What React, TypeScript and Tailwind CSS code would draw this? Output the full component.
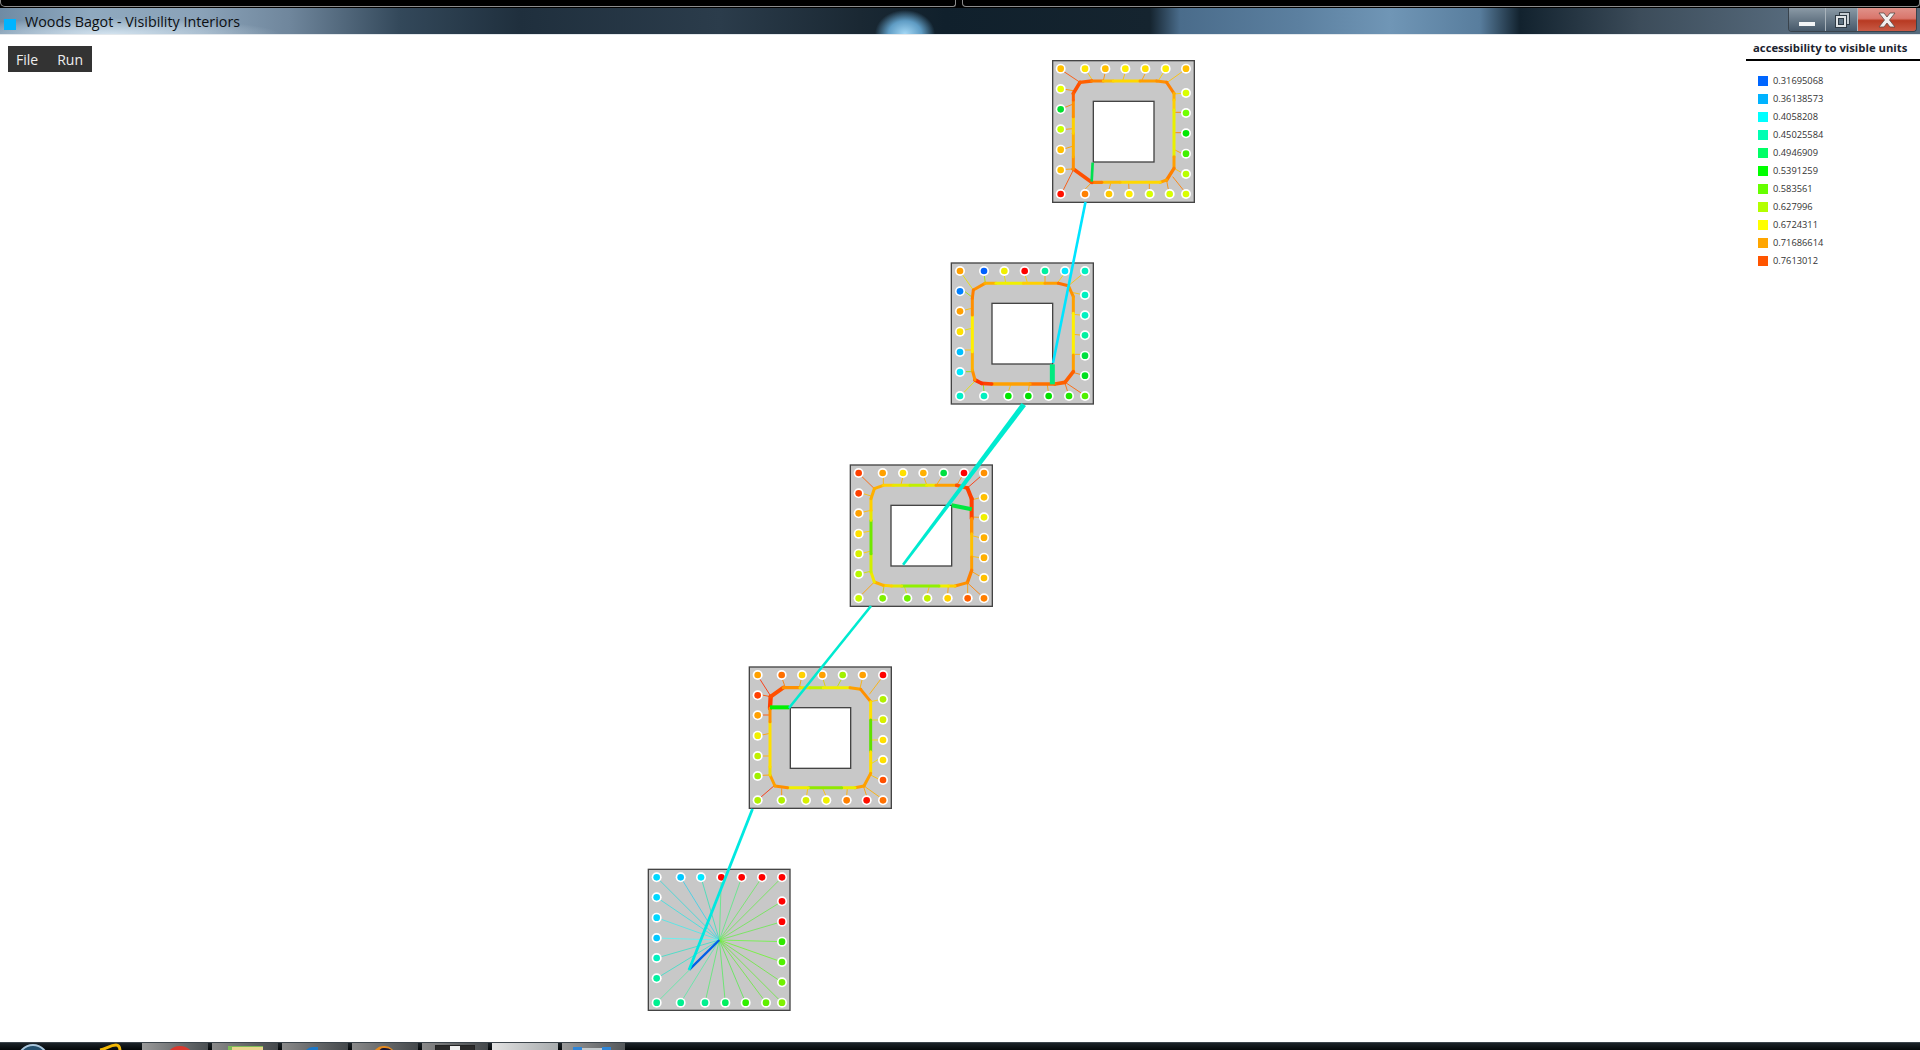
const legend = [
  ['#0066ff', '0.31695068'],
  ['#00b3ff', '0.36138573'],
  ['#00ffff', '0.4058208'],
  ['#00ffb3', '0.45025584'],
  ['#00ff66', '0.4946909'],
  ['#00ff00', '0.5391259'],
  ['#66ff00', '0.583561'],
  ['#b3ff00', '0.627996'],
  ['#ffff00', '0.6724311'],
  ['#ffa600', '0.71686614'],
  ['#ff5500', '0.7613012'],
];

type Dot = [number, number, string];
type Spoke = [number, number, number, number, string];

type Floor = {
  ox: number;
  oy: number;
  box: number[];
  hole?: number[];
  dots: Dot[];
  spokes: Spoke[];
  ringStart?: number[];
  ring?: [number, number, string, number?][];
  stub?: [number, number, number, number, string, number];
};

// everything in a floor is in 3x units from its ox/oy corner
const floors: Floor[] = [
  {
    ox: 1040,
    oy: 50,
    box: [38, 32, 463, 457],
    hole: [160, 154, 342, 336],
    dots: [
      [62, 56, '#ffc000'], [135, 56, '#ffe600'], [196, 56, '#ffc000'], [256, 56, '#ffee00'], [316, 56, '#ffe000'], [377, 56, '#ffee00'], [438, 56, '#ffc000'],
      [62, 117, '#e8ff00'], [62, 178, '#00e030'], [62, 238, '#c8ff00'], [62, 299, '#ffc000'], [62, 360, '#ffc000'], [62, 432, '#ff1000'],
      [135, 432, '#ff8000'], [207, 432, '#ffc800'], [268, 432, '#ffee00'], [329, 432, '#d8ff00'], [389, 432, '#d8ff00'], [438, 432, '#d8ff00'],
      [438, 129, '#d8ff00'], [438, 189, '#70ff00'], [438, 250, '#00e800'], [438, 311, '#40f000'], [438, 372, '#b8ff00'],
    ],
    spokes: [
      [72, 65, 120, 97, '#ff5000'], [143, 68, 157, 90, '#ffc000'], [195, 70, 190, 92, '#ff9000'], [255, 70, 248, 92, '#ffc000'], [316, 70, 305, 92, '#ffa000'], [370, 68, 355, 92, '#ffd000'], [427, 65, 382, 97, '#ffc000'],
      [75, 118, 100, 122, '#ff9000'], [75, 172, 100, 162, '#ff8000'], [75, 238, 100, 236, '#ffa000'], [75, 296, 100, 288, '#ffa000'], [75, 358, 100, 357, '#ffa000'], [70, 420, 100, 360, '#ff5000'],
      [135, 418, 155, 397, '#ffa000'], [207, 418, 212, 400, '#ffa000'], [267, 418, 266, 400, '#ff9000'], [328, 418, 328, 400, '#ff9000'], [385, 418, 380, 392, '#ff9000'], [430, 420, 398, 380, '#ff8000'],
      [425, 130, 402, 132, '#ffd000'], [425, 187, 405, 187, '#ff8000'], [425, 248, 405, 248, '#ff8000'], [425, 310, 405, 300, '#ffa000'], [425, 368, 402, 355, '#ffc000'],
    ],
    ringStart: [100, 130],
    ring: [
      [120, 97, '#ff5000', 11], [155, 93, '#ff6000', 10], [190, 93, '#ff8000'], [220, 93, '#ffc000'], [300, 93, '#ffd800'], [350, 93, '#ffa000'], [380, 97, '#ff9000'], [402, 130, '#ff8000'],
      [402, 150, '#ffb000'], [402, 180, '#ffd000'], [402, 320, '#e8f000'], [402, 355, '#ffa000'], [380, 390, '#ff8000', 10], [360, 397, '#ffa000'], [240, 397, '#ffd800'], [185, 397, '#ffc000'],
      [155, 397, '#ff8000', 10], [100, 357, '#ff5000', 11], [100, 320, '#ff9000'], [100, 250, '#ffb000'], [100, 200, '#ffd000'], [100, 150, '#ff9000'], [100, 130, '#ff6000'],
    ],
    stub: [158, 338, 155, 395, '#00e050', 8],
  },
  {
    ox: 940,
    oy: 255,
    box: [34, 24, 460, 447],
    hole: [156, 145, 338, 327],
    dots: [
      [60, 48, '#ffa000'], [132, 48, '#0060ff'], [193, 48, '#f0f000'], [254, 48, '#ff0000'], [315, 48, '#00f0a0'], [375, 48, '#00e8ff'], [435, 48, '#00f0c0'],
      [60, 109, '#0080ff'], [60, 169, '#ffa000'], [60, 230, '#ffe000'], [60, 291, '#00c0ff'], [60, 351, '#00e8ff'], [60, 423, '#00f0c8'],
      [132, 423, '#00f0c0'], [205, 423, '#00e800'], [265, 423, '#00e000'], [326, 423, '#00e000'], [387, 423, '#20e800'], [435, 423, '#50f000'],
      [435, 120, '#00f0c0'], [435, 181, '#00f0c0'], [435, 241, '#00f0a0'], [435, 302, '#00e040'], [435, 362, '#00e020'],
    ],
    spokes: [
      [68, 60, 100, 105, '#e8e000'], [133, 62, 136, 85, '#a0e000'], [193, 62, 197, 83, '#e8e000'], [256, 62, 262, 83, '#ffc800'], [315, 62, 315, 83, '#ffa000'], [370, 60, 353, 83, '#ffd000'], [424, 60, 388, 90, '#ffc000'],
      [75, 110, 97, 127, '#a0e000'], [75, 165, 95, 160, '#ffc000'], [75, 225, 95, 220, '#e8e000'], [75, 285, 95, 285, '#ffc000'], [78, 350, 95, 350, '#90e000'], [72, 412, 105, 378, '#e8e000'],
      [132, 410, 130, 388, '#90e000'], [205, 410, 212, 390, '#ffc000'], [265, 410, 268, 390, '#ffb000'], [325, 410, 322, 390, '#ffa000'], [383, 410, 375, 385, '#ff7000'], [425, 415, 380, 385, '#ff6000'],
      [423, 118, 395, 112, '#ffc000'], [420, 180, 400, 178, '#ffc000'], [420, 240, 400, 238, '#ffb000'], [420, 298, 400, 298, '#ffb000'], [420, 358, 398, 352, '#ff8000'],
    ],
    ringStart: [100, 105],
    ring: [
      [135, 85, '#ff9000'], [168, 85, '#ffb000'], [250, 85, '#f0f000'], [315, 85, '#ffd000'], [355, 85, '#ffa000'], [385, 92, '#ff7000'], [400, 125, '#ff9000'], [400, 175, '#ffa000'],
      [400, 300, '#fff000'], [400, 350, '#ffa000'], [375, 382, '#ff6000', 11], [345, 387, '#ff6000', 11], [270, 387, '#ff7000', 10], [155, 387, '#ffa000', 10], [125, 385, '#ff4000', 11], [105, 375, '#ff3000', 11],
      [97, 345, '#ff9000'], [97, 290, '#ffb000'], [97, 180, '#fff000'], [97, 130, '#ff9000'], [100, 105, '#ff8000'],
    ],
    stub: [337, 328, 337, 388, '#00ea80', 15],
  },
  {
    ox: 840,
    oy: 457,
    box: [31, 24, 457, 448],
    hole: [153, 145, 335, 327],
    dots: [
      [56, 48, '#ff4000'], [128, 48, '#ffa000'], [189, 48, '#ffe000'], [250, 48, '#ffb000'], [311, 48, '#00e040'], [372, 48, '#ff0000'], [432, 48, '#ff9000'],
      [56, 109, '#ff4000'], [56, 169, '#ffa000'], [56, 230, '#ffe000'], [56, 290, '#d8f000'], [56, 351, '#b8f800'], [56, 424, '#c8f800'],
      [128, 424, '#80f000'], [202, 424, '#70f000'], [262, 424, '#c0f000'], [323, 424, '#ffd000'], [383, 424, '#ff6000'], [432, 424, '#ff8000'],
      [432, 121, '#ffc000'], [432, 181, '#f0f000'], [432, 242, '#ffb000'], [432, 302, '#ffb000'], [432, 363, '#ffc000'],
    ],
    spokes: [
      [65, 58, 103, 95, '#ff6000'], [130, 62, 130, 85, '#ffb000'], [188, 62, 183, 83, '#ffb000'], [252, 62, 260, 83, '#ffb000'], [305, 60, 290, 83, '#ffa000'], [365, 60, 350, 85, '#ff8000'], [422, 58, 382, 93, '#ff3000'],
      [70, 110, 93, 117, '#ffc000'], [70, 165, 93, 160, '#ffc000'], [70, 226, 93, 222, '#ffd000'], [70, 288, 93, 282, '#ffd000'], [70, 348, 95, 342, '#d0e000'], [66, 412, 103, 375, '#ffa000'],
      [128, 410, 132, 388, '#c0d000'], [200, 410, 193, 388, '#e0e000'], [262, 410, 268, 388, '#ffc000'], [323, 410, 325, 388, '#ffa000'], [383, 410, 383, 378, '#ffa000'], [422, 414, 385, 380, '#ff8000'],
      [420, 122, 398, 128, '#ffb000'], [420, 181, 395, 180, '#ffa000'], [420, 242, 395, 236, '#ffc000'], [420, 302, 395, 298, '#ffc000'], [420, 358, 398, 345, '#ffa000'],
    ],
    ringStart: [103, 95],
    ring: [
      [130, 85, '#ffb000'], [160, 85, '#ffd000'], [210, 85, '#e8e800'], [260, 85, '#c0f000'], [288, 85, '#f0e800'], [350, 85, '#ffa000'], [382, 93, '#ff5000', 11], [395, 125, '#ff4000', 12],
      [395, 185, '#ff4000', 12], [395, 230, '#ff9000', 10], [395, 300, '#ffc000'], [395, 340, '#ffa000'], [382, 377, '#ff8000', 10], [345, 387, '#ff9000'], [325, 387, '#ffd000'], [297, 387, '#f0f000'],
      [185, 387, '#90f000'], [155, 387, '#e0e800'], [130, 385, '#ffd000'], [103, 375, '#ffb000'], [93, 345, '#f0e800'], [93, 290, '#d0f000'], [93, 190, '#70e800'], [93, 160, '#e8e800'], [93, 125, '#ffd000'], [103, 95, '#ffb000'],
    ],
    stub: [335, 145, 395, 157, '#00e840', 12],
  },
  {
    ox: 740,
    oy: 660,
    box: [28, 21, 454, 445],
    hole: [151, 143, 332, 325],
    dots: [
      [53, 45, '#ffa000'], [125, 45, '#ff7000'], [186, 45, '#ffd000'], [247, 45, '#ffa000'], [308, 45, '#a0f000'], [368, 45, '#ffa000'], [429, 45, '#ff0000'],
      [53, 106, '#ff4000'], [53, 166, '#ffa000'], [53, 227, '#f0f000'], [53, 288, '#c0f000'], [53, 348, '#a0f000'], [53, 421, '#b0f000'],
      [125, 421, '#b0f000'], [198, 421, '#d8f000'], [259, 421, '#f0f000'], [320, 421, '#ff8000'], [380, 421, '#ff1000'], [429, 421, '#ff7000'],
      [429, 118, '#b0f000'], [429, 179, '#d8f000'], [429, 240, '#ffe000'], [429, 300, '#ffe000'], [429, 360, '#ff5000'],
    ],
    spokes: [
      [60, 58, 92, 108, '#ff3000'], [128, 60, 135, 80, '#ff8000'], [183, 60, 178, 83, '#ffa000'], [250, 60, 256, 80, '#e0d000'], [303, 60, 292, 80, '#c0e000'], [366, 60, 360, 85, '#ffb000'], [422, 58, 388, 103, '#ffb000'],
      [66, 105, 92, 110, '#ff5000'], [68, 165, 90, 165, '#ff5000'], [66, 225, 90, 220, '#ffa000'], [68, 288, 90, 288, '#ffb000'], [66, 346, 90, 345, '#ffa000'], [62, 412, 105, 375, '#ff3000'],
      [125, 408, 125, 385, '#ff9000'], [200, 408, 203, 385, '#ffc000'], [258, 408, 248, 385, '#ffc000'], [320, 408, 322, 385, '#ffb000'], [380, 408, 370, 378, '#ffa000'], [420, 412, 372, 378, '#ffb000'],
      [415, 120, 392, 125, '#ffd000'], [415, 180, 392, 180, '#e8e000'], [415, 240, 392, 240, '#ffe000'], [415, 298, 392, 312, '#f0e000'], [415, 357, 392, 345, '#ffc000'],
    ],
    ringStart: [90, 145],
    ring: [
      [92, 110, '#ff4000', 13], [130, 83, '#ff5000', 12], [180, 83, '#ff9000', 10], [210, 83, '#f0e000'], [250, 83, '#c0f000'], [330, 83, '#f0f000'], [362, 88, '#ffa000'], [392, 125, '#ff9000'],
      [392, 180, '#ffe000'], [392, 275, '#60e000'], [392, 340, '#ffe000'], [372, 378, '#ffa000'], [345, 383, '#ffa000'], [305, 383, '#e8f000'], [205, 383, '#90e800'], [143, 383, '#f0f000'],
      [105, 378, '#ff9000'], [90, 345, '#ffa000'], [90, 320, '#f0e000'], [90, 185, '#ffe000'], [90, 145, '#ff9000'],
    ],
    stub: [90, 142, 148, 142, '#00f000', 12],
  },
  {
    ox: 640,
    oy: 860,
    box: [25, 28, 450, 451],
    dots: [
      [50, 52, '#00d8ff'], [122, 52, '#00c8ff'], [183, 52, '#00e8ff'], [244, 52, '#ff0000'], [305, 52, '#ff0000'], [366, 52, '#ff0000'], [426, 52, '#ff0000'],
      [50, 112, '#00d8ff'], [50, 173, '#00d8ff'], [50, 234, '#00c8ff'], [50, 294, '#00f0c0'], [50, 355, '#00f0a0'], [50, 428, '#00f090'],
      [122, 428, '#00f090'], [195, 428, '#00f090'], [256, 428, '#00f060'], [317, 428, '#30f000'], [378, 428, '#60f000'], [426, 428, '#80f000'],
      [426, 124, '#ff0000'], [426, 185, '#ff0000'], [426, 245, '#30e800'], [426, 306, '#50f000'], [426, 367, '#70f000'],
    ],
    spokes: [
      [50, 52, 238, 240, '#40d8d8'], [122, 52, 238, 240, '#40d0e8'], [183, 52, 238, 240, '#40e0b8'], [244, 52, 238, 240, '#60e888'], [305, 52, 238, 240, '#60e888'], [366, 52, 238, 240, '#70e868'], [426, 52, 238, 240, '#70e858'],
      [50, 112, 238, 240, '#40e0e0'], [50, 173, 238, 240, '#50e8e8'], [50, 234, 238, 240, '#60f4f4'], [50, 294, 238, 240, '#40e0c8'], [50, 355, 238, 240, '#40e0c8'], [50, 428, 238, 240, '#60e8a8'],
      [122, 428, 238, 240, '#60e8a8'], [195, 428, 238, 240, '#60e878'], [256, 428, 238, 240, '#60e868'], [317, 428, 238, 240, '#60e858'], [378, 428, 238, 240, '#70e848'], [426, 428, 238, 240, '#70e848'],
      [426, 124, 238, 240, '#70e858'], [426, 185, 238, 240, '#70e858'], [426, 245, 238, 240, '#70f448'], [426, 306, 238, 240, '#70f438'], [426, 367, 238, 240, '#70e848'],
    ],
    stub: [148, 329, 238, 240, '#0060e8', 7],
  },
];

// long sight lines between floors, page coordinates
const links = [
  { x1: 1085.5, y1: 202, x2: 1053, y2: 363, color: '#00e4ff', w: 2.6 },
  { x1: 871, y1: 606, x2: 789, y2: 708, color: '#00ead0', w: 2.6 },
  { x1: 752.5, y1: 809, x2: 689, y2: 970, color: '#00e8e0', w: 2.8 },
];

function Diagram() {
  return (
    <svg viewBox="0 0 1920 1050" className="absolute inset-0 h-full w-full">
      {floors.map((f) => (
        <g key={f.ox} transform={`translate(${f.ox} ${f.oy}) scale(${1 / 3})`}>
          <rect x={f.box[0]} y={f.box[1]} width={f.box[2] - f.box[0]} height={f.box[3] - f.box[1]} fill="#c8c8c8" stroke="#444" strokeWidth="4" />
          {f.hole && (
            <rect x={f.hole[0]} y={f.hole[1]} width={f.hole[2] - f.hole[0]} height={f.hole[3] - f.hole[1]} fill="#fff" stroke="#444" strokeWidth="4" />
          )}
          {f.spokes.map((s, i) => (
            <line key={i} x1={s[0]} y1={s[1]} x2={s[2]} y2={s[3]} stroke={s[4]} strokeWidth="2.6" />
          ))}
          {f.ring &&
            f.ring.map((p, i) => {
              const prev = i === 0 ? f.ringStart! : f.ring![i - 1];
              return (
                <line key={i} x1={prev[0]} y1={prev[1]} x2={p[0]} y2={p[1]} stroke={p[2]} strokeWidth={p[3] ?? 9} strokeLinecap="round" />
              );
            })}
          {f.stub && <line x1={f.stub[0]} y1={f.stub[1]} x2={f.stub[2]} y2={f.stub[3]} stroke={f.stub[4]} strokeWidth={f.stub[5]} />}
          {f.dots.map((d, i) => (
            <g key={i}>
              <circle cx={d[0]} cy={d[1]} r="15" fill="#fff" />
              <circle cx={d[0]} cy={d[1]} r="10" fill={d[2]} />
            </g>
          ))}
        </g>
      ))}
      {links.map((l) => (
        <line key={l.x1} x1={l.x1} y1={l.y1} x2={l.x2} y2={l.y2} stroke={l.color} strokeWidth={l.w} />
      ))}
      {/* this one narrows on its way down */}
      <polygon points="1021.5,403 1026,406 904.2,565.6 902,564" fill="#00ead0" />
    </svg>
  );
}

function WindowButtons() {
  return (
    <div className="flex h-[24px] w-[129px] overflow-hidden rounded-b-[4px] border border-t-0 border-[#39434c]">
      <div className="flex w-[36px] items-end justify-center bg-gradient-to-b from-[#8b9aa6] to-[#47596a] pb-[5px]">
        <div className="h-[4px] w-[16px] bg-[#f2f4f6]" />
      </div>
      <div className="flex w-[33px] items-center justify-center border-x border-[#a9b3bb] bg-gradient-to-b from-[#8b9aa6] to-[#47596a]">
        <svg width="18" height="18" viewBox="0 0 18 18" fill="none" stroke="#2f3a44" strokeWidth="1">
          <rect x="6.5" y="1.5" width="10" height="12" fill="#c5ccd2" />
          <rect x="2.5" y="4.5" width="11" height="12" fill="#dfe3e6" />
          <rect x="5.5" y="7.5" width="5" height="6" fill="#5f7282" />
        </svg>
      </div>
      <div className="flex flex-1 items-center justify-center bg-[linear-gradient(180deg,#e0928a_0%,#d9766c_45%,#b83a22_55%,#c85a45_100%)]">
        <svg width="24" height="18" viewBox="0 0 24 18">
          <path d="M4 2h5l3 4 3-4h5l-5.500 7L20 16h-5l-3-4-3 4H4l5.500-7z" fill="#f1eeee" stroke="#5a4a48" strokeWidth="0.8" />
        </svg>
      </div>
    </div>
  );
}

function Taskbar() {
  return (
    <div className="relative flex h-[8px] shrink-0 gap-[4px] overflow-hidden border-t border-[#3c454c] bg-gradient-to-b from-[#1c2328] to-[#05080a] pl-[142px]">
      <div className="absolute left-[17px] top-[1px] h-[32px] w-[32px] rounded-full border-2 border-[#a9c6dc] bg-[#24506e]" />
      <svg width="26" height="8" viewBox="0 0 26 8" className="absolute left-[98px] top-0">
        <path d="M2 7C8 6 12 2 18 2c3 0 4 2 4 6" fill="none" stroke="#f2b705" strokeWidth="3" />
      </svg>
      <div className="relative w-[66px] overflow-hidden bg-gradient-to-r from-[#9a9a9a] to-[#4a4f52]">
        <div className="absolute left-[23px] top-[3px] h-[30px] w-[30px] rounded-full bg-[#d9392f]" />
      </div>
      <div className="relative w-[66px] overflow-hidden bg-gradient-to-r from-[#8a8a8a] to-[#45494c]">
        <div className="absolute left-[16px] top-[3px] h-[10px] w-[35px] border-l-[4px] border-t border-[#7dbb58] bg-[#e8d48e]" />
      </div>
      <div className="relative w-[66px] overflow-hidden bg-gradient-to-r from-[#8a8a8a] to-[#45494c]">
        <div className="absolute left-[21px] top-[4px] h-[10px] w-[15px] rounded-tl-[14px] bg-[#1c78c8]" />
      </div>
      <div className="relative w-[66px] overflow-hidden bg-gradient-to-r from-[#8a8a8a] to-[#45494c]">
        <div className="absolute left-[21px] top-[3px] h-[10px] w-[22px] rounded-t-full border-l-[5px] border-t-2 border-[#e58a1f] bg-[#1a1630]" />
      </div>
      <div className="relative w-[66px] overflow-hidden bg-gradient-to-r from-[#8a8a8a] to-[#45494c]">
        <div className="absolute left-[13px] top-[2px] h-[10px] w-[40px] border border-[#222] bg-[#2a2a2a]" />
        <div className="absolute left-[28px] top-[3px] h-[10px] w-[10px] bg-[#eee]" />
      </div>
      <div className="w-[66px] bg-gradient-to-r from-[#e2e2e2] to-[#a8acae]" />
      <div className="relative w-[63px] overflow-hidden bg-gradient-to-r from-[#9a9a9a] to-[#54585b]">
        <div className="absolute left-[11px] top-[4px] h-[10px] w-[9px] bg-[#2f86d8]" />
        <div className="absolute left-[20px] top-[5px] h-[10px] w-[20px] bg-[#c4c9cc]" />
        <div className="absolute left-[40px] top-[4px] h-[10px] w-[9px] bg-[#2f86d8]" />
      </div>
    </div>
  );
}

export default function App() {
  return (
    <div className="relative flex h-[1050px] w-[1920px] flex-col overflow-hidden bg-white font-['Open_Sans',sans-serif]">
      <div className="flex h-[8px] shrink-0 gap-[6px] bg-black">
        <div className="h-[7px] w-[956px] rounded-bl-[5px] rounded-br-[3px] border-x border-b border-[#8c8c8c]" />
        <div className="h-[7px] flex-1 rounded-b-[4px] border-x border-b border-[#8c8c8c]" />
      </div>

      <div className="flex h-[26px] shrink-0 items-start justify-between bg-[radial-gradient(ellipse_30px_24px_at_905px_100%,#a4d8f6_0%,#5f9cc4_55%,transparent_100%),radial-gradient(ellipse_170px_16px_at_110px_100%,#d2e2ee_0%,transparent_100%),linear-gradient(90deg,#6f8ba4_0px,#8fa9bf_90px,#8aa2b8_200px,#6f869c_290px,#33485a_400px,#1f2f3d_520px,#2b3c4b_720px,#1a2833_860px,#10202c_945px,#15242f_1150px,#4a6c8b_1180px,#5c80a0_1300px,#7096b6_1390px,#587d9d_1480px,#12222e_1520px,#3c4c5a_1640px,#566a7c_1790px)] pr-[3px]">
        <div className="flex items-center">
          <div className="ml-[4px] mt-[9px] h-[11px] w-[12px] bg-[#00b4ff]" />
          <span className="ml-[9px] mt-[4px] text-[14.300000px] leading-[20px] text-[#0c0f12]">Woods Bagot - Visibility Interiors</span>
        </div>
        <WindowButtons />
      </div>
      <div className="h-[1px] shrink-0 bg-[#e3e8ec]" />

      <div className="flex flex-1 items-start justify-between">
        <div className="ml-[8px] mt-[11px] flex h-[26px] w-[84px] items-center gap-[19px] bg-[#333] pl-[8px] text-[14px] text-[#eee]">
          <span>File</span>
          <span>Run</span>
        </div>
        <div className="w-[174px]">
          <div className="mt-[4px] h-[20px] pl-[7px] text-[11.300000px] font-bold leading-[18px] text-[#1c2430]">accessibility to visible units</div>
          <div className="h-[2px] bg-black" />
          <div className="mt-[11px] flex flex-col">
            {legend.map(([color, label]) => (
              <div key={label} className="flex h-[18px] items-center gap-[5px] pl-[12px]">
                <div className="h-[10px] w-[10px]" style={{ backgroundColor: color }} />
                <span className="text-[9.300000px] text-[#333]">{label}</span>
              </div>
            ))}
          </div>
        </div>
      </div>

      <Taskbar />
      <Diagram />
    </div>
  );
}
